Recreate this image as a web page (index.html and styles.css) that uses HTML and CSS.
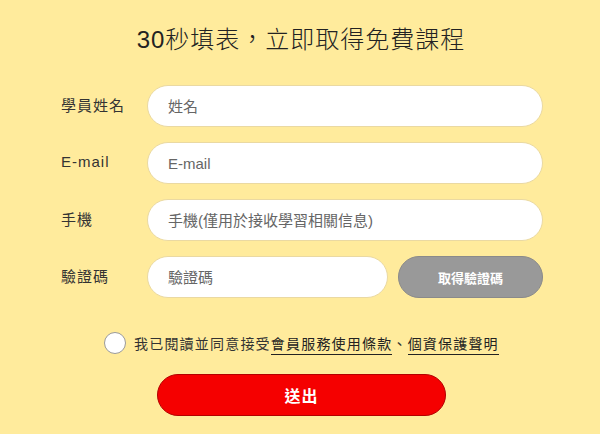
FILE: index.html
```html
<!DOCTYPE html>
<html lang="zh-Hant">
<head>
<meta charset="utf-8">
<title>免費課程</title>
<link rel="stylesheet" href="styles.css">
</head>
<body>
<main class="page">
  <h1 class="title">30秒填表，立即取得免費課程</h1>
  <form class="form">
    <div class="row">
      <label class="label">學員姓名</label>
      <div class="field"><input class="input" type="text" placeholder="姓名"></div>
    </div>
    <div class="row">
      <label class="label">E-mail</label>
      <div class="field"><input class="input" type="text" placeholder="E-mail"></div>
    </div>
    <div class="row">
      <label class="label">手機</label>
      <div class="field"><input class="input" type="text" placeholder="手機(僅用於接收學習相關信息)"></div>
    </div>
    <div class="row">
      <label class="label">驗證碼</label>
      <div class="field split">
        <input class="input code" type="text" placeholder="驗證碼">
        <button type="button" class="getcode">取得驗證碼</button>
      </div>
    </div>
    <div class="agree">
      <span class="radio"></span>
      <span class="agree-text">我已閱讀並同意接受<a class="link">會員服務使用條款</a>、<a class="link">個資保護聲明</a></span>
    </div>
    <div class="submit-wrap">
      <button type="button" class="submit">送出</button>
    </div>
  </form>
</main>
</body>
</html>
```
FILE: styles.css
```css
* { box-sizing: border-box; }
html, body { margin: 0; padding: 0; }
body {
  background: #ffeb9c;
  font-family: "Liberation Sans", "Noto Sans CJK TC", sans-serif;
  color: #333;
  width: 600px;
  height: 434px;
  overflow: hidden;
}
.page {
  padding-top: 25px;
}
.title {
  margin: 0;
  text-align: center;
  font-size: 24px;
  line-height: 30px;
  font-weight: 300;
  color: #222;
  letter-spacing: 1px;
  padding-left: 2px;
}
.form {
  margin-top: 30px;
  display: flex;
  flex-direction: column;
  gap: 15px;
  padding-left: 61px;
}
.row {
  display: flex;
  align-items: center;
  height: 42px;
}
.label {
  width: 86px;
  font-size: 15px;
  letter-spacing: 1px;
  color: #333;
  margin-top: -4px;
}
.field {
  width: 396px;
  display: flex;
}
.split { gap: 10px; }
.input {
  width: 100%;
  height: 42px;
  border: 1px solid #ead9a2;
  border-radius: 21px;
  background: #fff;
  padding: 0 20px;
  font-family: inherit;
  font-size: 15px;
  color: #333;
  outline: none;
}
.input::placeholder { color: #666; }
.code { width: 241px; flex: none; }
.getcode {
  flex: 1;
  height: 42px;
  border: 1px solid #8a8a8a;
  border-radius: 21px;
  background: #999;
  color: #fff;
  font-family: inherit;
  font-size: 13px;
  font-weight: 700;
}
.agree {
  margin-top: 19px;
  display: flex;
  align-items: center;
  padding-left: 43px;
  height: 22px;
}
.radio {
  width: 22px;
  height: 22px;
  border-radius: 50%;
  background: #fff;
  border: 1px solid #9a9a9a;
  flex: none;
}
.agree-text {
  margin-left: 8px;
  font-size: 14px;
  letter-spacing: 1.2px;
  color: #333;
}
.link {
  color: #222;
  text-decoration: none;
  border-bottom: 1px solid #222;
  padding-bottom: 2px;
}
.submit-wrap {
  margin-top: 5px;
  padding-left: 96px;
}
.submit {
  width: 289px;
  height: 42px;
  border: 1px solid #b30000;
  border-radius: 21px;
  background: #f50000;
  color: #fff;
  font-family: inherit;
  font-size: 16px;
  font-weight: 700;
  letter-spacing: 1px;
}
```
